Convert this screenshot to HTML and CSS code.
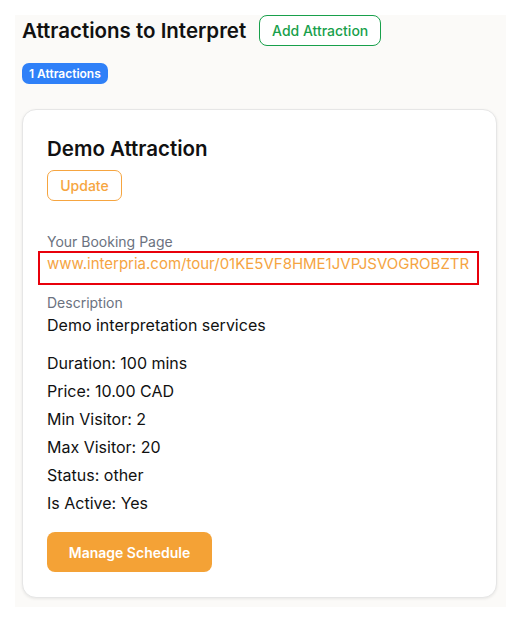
FILE: index.html
```html
<!DOCTYPE html>
<html lang="en">
<head>
<meta charset="utf-8">
<title>Attractions to Interpret</title>
<link rel="stylesheet" href="styles.css">
</head>
<body>
<main class="page">
  <header class="header">
    <h1 class="title">Attractions to Interpret</h1>
    <button class="btn-outline-green">Add Attraction</button>
  </header>
  <div class="badge-row"><span class="badge">1 Attractions</span></div>
  <section class="card">
    <h2 class="card-title">Demo Attraction</h2>
    <button class="btn-outline-orange">Update</button>
    <div class="label label-first">Your Booking Page</div>
    <div class="link-wrap"><a class="link" href="#">www.interpria.com/tour/01KE5VF8HME1JVPJSVOGROBZTR</a></div>
    <div class="label label-desc">Description</div>
    <div class="desc">Demo interpretation services</div>
    <ul class="facts">
      <li>Duration: 100 mins</li>
      <li>Price: 10.00 CAD</li>
      <li>Min Visitor: 2</li>
      <li>Max Visitor: 20</li>
      <li>Status: other</li>
      <li>Is Active: Yes</li>
    </ul>
    <button class="btn-orange">Manage Schedule</button>
  </section>
</main>
</body>
</html>
```
FILE: styles.css
```css
* { box-sizing: border-box; }
body {
  margin: 0;
  background: #ffffff;
  font-family: Inter, "Noto Sans", sans-serif;
  color: #111111;
}
.page {
  margin: 15px 0 0 15px;
  width: 491px;
  height: 592px;
  background: #fbfaf8;
  padding: 0 7px;
}
.header {
  display: flex;
  align-items: center;
  gap: 13px;
  height: 31px;
}
.title {
  margin: 0;
  font-size: 20.5px;
  font-weight: 600;
  color: #111;
}
button { font-family: inherit; cursor: pointer; }
.btn-outline-green {
  height: 31px;
  width: 122px;
  border: 1.5px solid #18a04b;
  border-radius: 8px;
  background: #fff;
  color: #18a04b;
  font-size: 14px;
  font-weight: 500;
}
.badge-row { margin-top: 17px; height: 21px; display: flex; }
.badge {
  display: inline-flex;
  align-items: center;
  height: 21px;
  padding: 0 7px;
  background: #2f80f8;
  color: #fff;
  border-radius: 7px;
  font-size: 12px;
  font-weight: 600;
}
.card {
  margin-top: 25px;
  width: 475px;
  background: #fff;
  border: 1px solid #e6e6e6;
  border-radius: 14px;
  box-shadow: 0 1px 3px rgba(0,0,0,0.08);
  padding: 25px 24px 25px 24px;
}
.card-title {
  margin: 0;
  font-size: 20.5px;
  line-height: 28px;
  font-weight: 600;
  color: #111;
}
.btn-outline-orange {
  display: block;
  margin-top: 7px;
  height: 31px;
  width: 75px;
  border: 1.5px solid #f6a540;
  border-radius: 7px;
  background: #fff;
  color: #f6a540;
  font-size: 14px;
  font-weight: 500;
}
.label {
  font-size: 14px;
  line-height: 20px;
  color: #6b7280;
}
.label-first { margin-top: 31px; }
.label-desc { margin-top: 10px; }
.link-wrap { line-height: 22px; }
.link {
  display: inline-block;
  margin-left: -7px;
  padding: 0 8px 8px 7px;
  outline: 2px solid #e8000b;
  color: #f5a442;
  font-size: 15px;
  line-height: 22px;
  text-decoration: none;
}
.desc {
  font-size: 16px;
  line-height: 24px;
  color: #111;
}
.facts {
  list-style: none;
  margin: 12px 0 0;
  padding: 0;
  font-size: 16px;
  line-height: 28px;
  color: #111;
}
.btn-orange {
  display: block;
  margin-top: 15px;
  height: 40px;
  width: 165px;
  border: none;
  border-radius: 8px;
  background: #f4a236;
  color: #fff;
  font-size: 14px;
  font-weight: 600;
}
```
